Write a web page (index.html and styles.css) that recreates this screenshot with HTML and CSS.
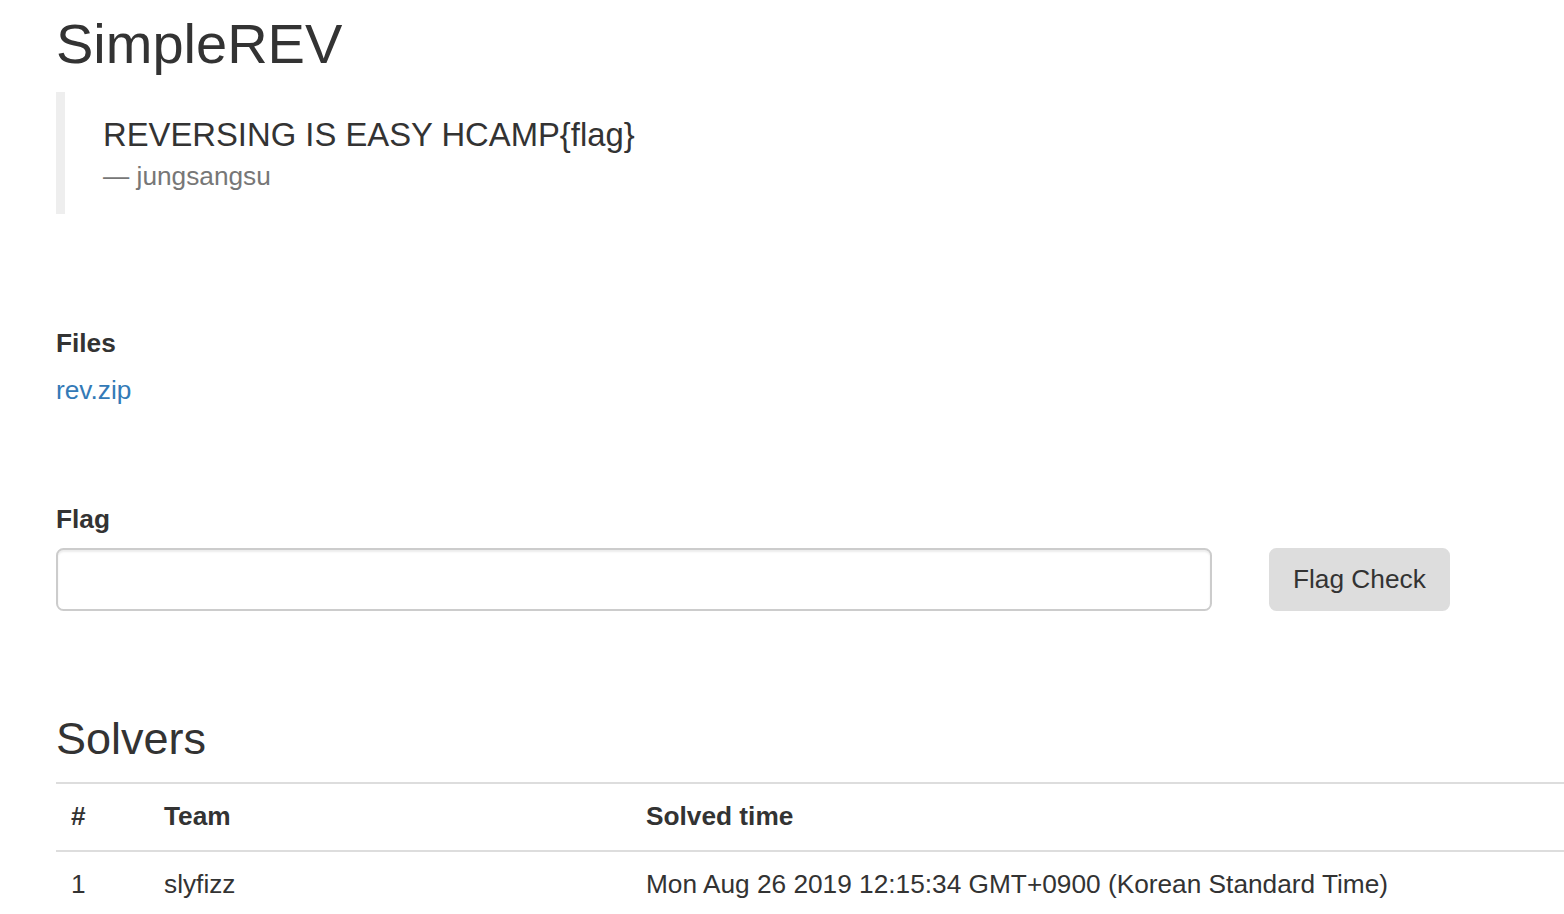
FILE: index.html
```html
<!DOCTYPE html>
<html lang="en">
<head>
<meta charset="utf-8">
<title>SimpleREV</title>
<link rel="stylesheet" href="styles.css">
</head>
<body>
<div class="page">
  <h2 class="title">SimpleREV</h2>
  <blockquote class="quote">
    <p class="quote-text">REVERSING IS EASY HCAMP{flag}</p>
    <footer class="quote-author">— jungsangsu</footer>
  </blockquote>

  <section class="files">
    <label class="field-label">Files</label>
    <div class="file-list"><a class="file-link" href="#">rev.zip</a></div>
  </section>

  <section class="flag">
    <label class="field-label" for="flag">Flag</label>
    <div class="flag-row">
      <input class="flag-input" id="flag" type="text">
      <button class="flag-btn" type="button">Flag Check</button>
    </div>
  </section>

  <h3 class="solvers-title">Solvers</h3>
  <table class="solvers">
    <thead>
      <tr><th class="col-num">#</th><th class="col-team">Team</th><th>Solved time</th></tr>
    </thead>
    <tbody>
      <tr><td>1</td><td>slyfizz</td><td>Mon Aug 26 2019 12:15:34 GMT+0900 (Korean Standard Time)</td></tr>
    </tbody>
  </table>
</div>
</body>
</html>
```
FILE: styles.css
```css
html, body {
  margin: 0;
  padding: 0;
  background: #fff;
}
body {
  font-family: "Liberation Sans", Arial, Helvetica, sans-serif;
  font-size: 26.25px;
  line-height: 37.5px;
  color: #333;
  overflow-x: hidden;
}
.page {
  padding: 0 0 0 56px;
}
.title {
  font-size: 56px;
  line-height: 62px;
  font-weight: 400;
  margin: 13px 0 17px;
}
.quote {
  margin: 0;
  padding: 18.5px 38px;
  border-left: 9px solid #eee;
}
.quote-text {
  margin: 0;
  font-size: 32.8px;
  line-height: 47px;
}
.quote-author {
  display: block;
  font-size: 26.25px;
  line-height: 37.5px;
  color: #777;
}
.files {
  margin-top: 111px;
}
.field-label {
  display: block;
  font-weight: 700;
  margin-bottom: 9.5px;
}
.file-link {
  color: #337ab7;
  text-decoration: none;
}
.flag {
  margin-top: 92px;
}
.flag-row {
  display: flex;
  align-items: flex-start;
  gap: 57px;
}
.flag-input {
  box-sizing: border-box;
  width: 1156px;
  height: 63px;
  margin: 0;
  border: 2px solid #ccc;
  border-radius: 7.5px;
  box-shadow: inset 0 2px 2px rgba(0,0,0,0.075);
  font: inherit;
  padding: 0 22px;
}
.flag-btn {
  box-sizing: border-box;
  height: 63px;
  margin: 0;
  padding: 0 22px;
  border: 2px solid #ddd;
  border-radius: 7.5px;
  background: #ddd;
  color: #333;
  font-family: inherit;
  font-size: 26.25px;
  line-height: 37.5px;
}
.solvers-title {
  font-size: 45px;
  line-height: 49.5px;
  font-weight: 400;
  margin: 103px 0 18px;
}
.solvers {
  width: 100%;
  border-collapse: collapse;
}
.solvers th, .solvers td {
  text-align: left;
  padding: 14px 15px 15px;
  vertical-align: top;
}
.solvers th {
  border-top: 2px solid #ddd;
  border-bottom: 2px solid #ddd;
  font-weight: 700;
}
.col-num { width: 63px; }
.col-team { width: 452px; }
```
